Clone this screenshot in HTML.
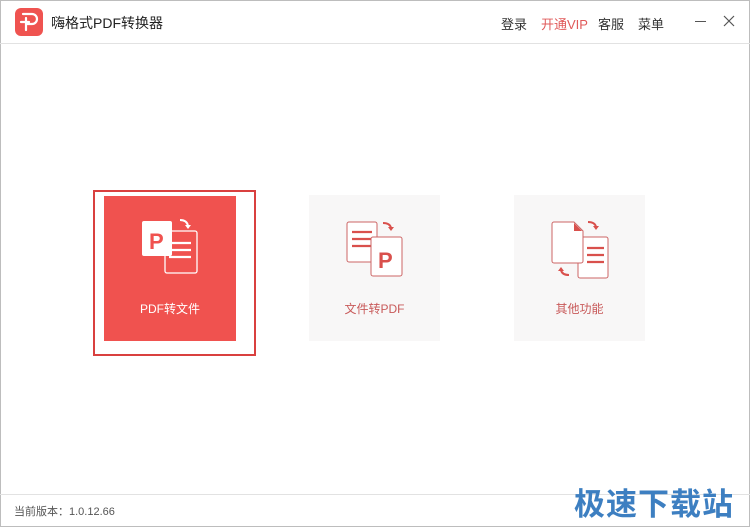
<!DOCTYPE html>
<html><head><meta charset="utf-8"><style>
*{margin:0;padding:0;box-sizing:border-box}
body{width:750px;height:527px;background:#fff;font-family:"Liberation Sans","Noto Sans CJK SC",sans-serif;position:relative;overflow:hidden}
.win{position:absolute;left:0;top:0;width:750px;height:527px;border:1px solid #bdbdbd}
.abs{position:absolute}
.t{font-size:13px;color:#333}
.card{position:absolute;top:195px;width:131px;height:146px;background:#f8f7f7}
.lbl{position:absolute;left:0;width:100%;top:105px;text-align:center;font-size:12px;color:#c85a5a}
</style></head><body>
<div class="win"></div>
<div class="abs" style="left:0;top:43px;width:750px;height:1px;background:#e2e2e2"></div>
<div class="abs" style="left:0;top:494px;width:750px;height:1px;background:#e2e2e2"></div>
<div class="abs" style="left:15px;top:8px;width:28px;height:28px;border-radius:6px;background:#ef5350"></div>
<svg class="abs" style="left:15px;top:8px" width="28" height="28"><path d="M8 6h9a5 5 0 0 1 0 10h-6M11 10v12M6 14h8" stroke="#fff" stroke-width="2.2" fill="none" stroke-linecap="round"/></svg>
<div class="abs t" style="left:51px;top:13px;font-size:14px;color:#222">嗨格式PDF转换器</div>
<div class="abs t" style="left:501px;top:14px">登录</div>
<div class="abs t" style="left:541px;top:14px;color:#e05a5a">开通VIP</div>
<div class="abs t" style="left:598px;top:14px">客服</div>
<div class="abs t" style="left:638px;top:14px">菜单</div>
<div class="abs" style="left:695px;top:21px;width:11px;height:1px;background:#555"></div>
<svg class="abs" style="left:723px;top:15px" width="12" height="12"><path d="M1 1L11 11M11 1L1 11" stroke="#555" stroke-width="1.2"/></svg>

<div class="abs" style="left:93px;top:190px;width:163px;height:166px;border:2px solid #d9403f"></div>
<div class="card" style="left:104px;top:196px;width:132px;height:145px;background:#f0524f">
 <svg class="abs" style="left:36px;top:20px" width="60" height="65">
  <rect x="25" y="15" width="32" height="42" rx="2" fill="none" stroke="#fff" stroke-width="1.3"/>
  <path d="M29 27h22M29 34h22M29 41h22" stroke="#fff" stroke-width="2.2"/>
  <rect x="2" y="5" width="30" height="35" rx="2" fill="#fff"/>
  <text x="9" y="33" font-family="Liberation Sans" font-weight="bold" font-size="22" fill="#f0524f">P</text>
  <path d="M40 4q7 0 8 6" stroke="#fff" stroke-width="2" fill="none"/><path d="M45 9l3 4 3-4z" fill="#fff"/>
 </svg>
 <div class="lbl" style="color:#fff;top:104px">PDF转文件</div>
</div>
<div class="card" style="left:309px">
 <svg class="abs" style="left:36px;top:25px" width="60" height="65">
  <rect x="2" y="2" width="30" height="40" rx="2" fill="#fff" stroke="#c66" stroke-width="1"/>
  <path d="M7 12h20M7 19h20M7 26h20" stroke="#d9504c" stroke-width="2.2"/>
  <rect x="26" y="17" width="31" height="39" rx="2" fill="#fff" stroke="#c66" stroke-width="1"/>
  <text x="33" y="48" font-family="Liberation Sans" font-weight="bold" font-size="22" fill="#d9504c">P</text>
  <path d="M38 3q7 0 8 5" stroke="#d9504c" stroke-width="2" fill="none"/><path d="M43 7l3 4 3-4z" fill="#d9504c"/>
 </svg>
 <div class="lbl">文件转PDF</div>
</div>
<div class="card" style="left:514px">
 <svg class="abs" style="left:36px;top:25px" width="60" height="65">
  <rect x="28" y="17" width="30" height="41" rx="2" fill="#fff" stroke="#c66" stroke-width="1"/>
  <path d="M37 28h17M37 35h17M37 42h17" stroke="#d9504c" stroke-width="2.2"/>
  <path d="M4 2h20l9 9v30a2 2 0 0 1-2 2H4a2 2 0 0 1-2-2V4a2 2 0 0 1 2-2z" fill="#fff" stroke="#c66"/>
  <path d="M24 3l8 8h-8z" fill="#d9504c"/>
  <path d="M38 2q7 0 8 5" stroke="#d9504c" stroke-width="2" fill="none"/><path d="M43 6l3 4 3-4z" fill="#d9504c"/>
  <path d="M19 55q-7 0-8-5" stroke="#d9504c" stroke-width="2" fill="none"/><path d="M8 51l3-4 3 4z" fill="#d9504c"/>
 </svg>
 <div class="lbl">其他功能</div>
</div>
<div class="abs" style="left:14px;top:503px;font-size:11px;color:#555">当前版本：1.0.12.66</div>
<div class="abs" style="left:574px;top:479px;font-size:31px;font-weight:bold;letter-spacing:1px;color:#3d7fc1">极速下载站</div>
</body></html>
